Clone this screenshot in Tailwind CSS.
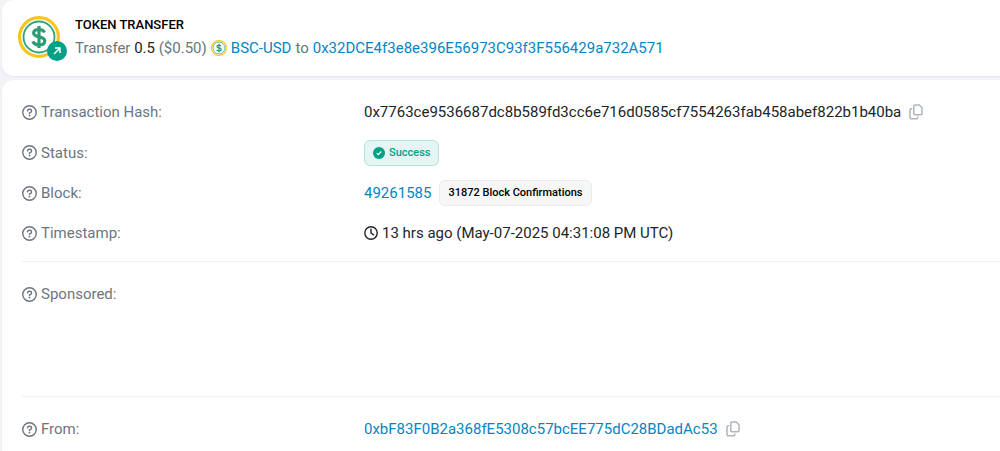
<!DOCTYPE html>
<html lang="en">
    <head>
        <meta charset="utf-8">
        <meta name="viewport" content="width=device-width, initial-scale=1.0">
        <script src="https://cdn.jsdelivr.net/npm/@tailwindcss/browser@4"></script>
        <title>Transaction Details</title>
    </head>
    <body class="min-h-screen overflow-x-hidden bg-[#f1f3f7] pl-[2px] font-['Roboto',sans-serif] text-[15px] leading-6 text-[#212529]">

        <!-- Shared icons -->
        <svg class="hidden">
            <symbol id="icon-help" viewBox="0 0 16 16">
                <circle cx="8" cy="8" r="7.2" fill="none" stroke="currentColor" stroke-width="1.5"/>
                <path d="M5.9 6.300c0-1.100.8-1.800 1.900-1.800h.5c1.100 0 1.900.8 1.900 1.800 0 .7-.4 1.200-1 1.500L8 8.500v.7" fill="none" stroke="currentColor" stroke-width="1.5" stroke-linecap="round"/>
                <circle cx="8" cy="11.300" r="1" fill="currentColor"/>
            </symbol>
            <symbol id="icon-copy" viewBox="0 0 14 16">
                <path d="M6 1h4.300L13 3.700V9.500a1.200 1.200 0 0 1-1.200 1.200H6a1.200 1.200 0 0 1-1.200-1.200V2.200A1.200 1.200 0 0 1 6 1z" fill="none" stroke="currentColor" stroke-width="1.500" stroke-linejoin="round"/>
                <path d="M3.200 4.700H2.200A1.200 1.200 0 0 0 1 5.900v7.600a1.200 1.200 0 0 0 1.200 1.200H7.500a1.200 1.200 0 0 0 1.200-1.200V12.500" fill="none" stroke="currentColor" stroke-width="1.500"/>
            </symbol>
            <symbol id="icon-usd" viewBox="0 0 42 42">
                <circle cx="21" cy="21" r="19.400" fill="#fff" stroke="#f8c51c" stroke-width="3.200"/>
                <circle cx="21" cy="21" r="15.500" fill="#fff" stroke="#2ea57c" stroke-width="1.800"/>
                <path d="M26.500 16.500c-.8-2-2.800-3-5.500-3-3.300 0-5.400 1.400-5.400 3.600 0 5.300 11.200 2.300 11.200 7.800 0 2.400-2.300 3.900-5.800 3.900-3.100 0-5.300-1.200-6.100-3.400M21 10v22" fill="none" stroke="#2a9d74" stroke-width="3.200"/>
            </symbol>
        </svg>

        <!-- Summary card -->
        <section class="flex items-start gap-[15px] rounded-l-xl bg-white py-[14px] pb-4 pl-4 shadow-xs">
            <div class="relative mt-0.5 shrink-0">
                <svg class="size-[42px]"><use href="#icon-usd"/></svg>
                <svg class="absolute top-[25px] left-[29px] size-5" viewBox="0 0 20 20">
                    <circle cx="10" cy="10" r="10" fill="#00a186"/>
                    <path d="M7 13l6-6M8 7h5v5" fill="none" stroke="#fff" stroke-width="1.500"/>
                </svg>
            </div>
            <div>
                <h1 class="text-[13px] leading-[22px] font-medium text-black">TOKEN TRANSFER</h1>
                <p class="flex items-center gap-1 whitespace-nowrap text-[#6c757d]">
                    <span>Transfer <span class="text-[#212529]">0.5</span> ($0.50)</span>
                    <svg class="size-4"><use href="#icon-usd"/></svg>
                    <a href="#" class="text-[#0784c3]">BSC-USD</a>
                    <span>to</span>
                    <a href="#" class="text-[#0784c3]">0x32DCE4f3e8e396E56973C93f3F556429a732A571</a>
                </p>
            </div>
        </section>

        <!-- Details card -->
        <main class="mt-1 rounded-l-xl bg-white pt-3 pb-6 pl-5 shadow-xs">
            <dl class="whitespace-nowrap">
                <div class="grid h-10 grid-cols-[342px_1fr] items-center">
                    <dt class="flex items-center gap-1 text-[#6c757d]"><svg class="size-[15px]"><use href="#icon-help"/></svg>Transaction Hash:</dt>
                    <dd class="flex items-center gap-2">0x7763ce9536687dc8b589fd3cc6e716d0585cf7554263fab458abef822b1b40ba
                        <button type="button" aria-label="Copy hash" class="text-[#adb5bd]"><svg class="h-4 w-[14px]"><use href="#icon-copy"/></svg></button>
                    </dd>
                </div>
                <div class="grid h-[41px] grid-cols-[342px_1fr] items-center">
                    <dt class="flex items-center gap-1 text-[#6c757d]"><svg class="size-[15px]"><use href="#icon-help"/></svg>Status:</dt>
                    <dd class="flex">
                        <span class="flex h-[26px] items-center gap-1 rounded-md border border-[#b3e3db] bg-[#e5f5f3] px-2 text-[11px] font-medium text-[#00a186]">
                            <svg class="size-3" viewBox="0 0 12 12">
                                <circle cx="6" cy="6" r="6" fill="currentColor"/>
                                <path d="M3.700 6.100l1.600 1.600 3-3.200" fill="none" stroke="#fff" stroke-width="1.200"/>
                            </svg>Success
                        </span>
                    </dd>
                </div>
                <div class="grid h-10 grid-cols-[342px_1fr] items-center">
                    <dt class="flex items-center gap-1 text-[#6c757d]"><svg class="size-[15px]"><use href="#icon-help"/></svg>Block:</dt>
                    <dd class="flex items-center gap-2">
                        <a href="#" class="text-[#0784c3]">49261585</a>
                        <span class="flex h-[26px] items-center rounded-md border border-[#e9ecef] bg-[#f7f7f8] px-2 text-[11px] font-medium text-black">31872 Block Confirmations</span>
                    </dd>
                </div>
                <div class="grid h-10 grid-cols-[342px_1fr] items-center">
                    <dt class="flex items-center gap-1 text-[#6c757d]"><svg class="size-[15px]"><use href="#icon-help"/></svg>Timestamp:</dt>
                    <dd class="flex items-center gap-1">
                        <svg class="size-[14px]" viewBox="0 0 14 14" fill="none" stroke="currentColor" stroke-width="1.400">
                            <circle cx="7" cy="7" r="6.200"/>
                            <path d="M7 3.200V7l2.600 1.800" stroke-linecap="round"/>
                        </svg>13 hrs ago (May-07-2025 04:31:08 PM UTC)
                    </dd>
                </div>
            </dl>

            <hr class="my-2 border-[#eff2f4]">

            <dl class="min-h-[118px] pt-1">
                <div class="grid h-10 grid-cols-[342px_1fr] items-center">
                    <dt class="flex items-center gap-1 text-[#6c757d]"><svg class="size-[15px]"><use href="#icon-help"/></svg>Sponsored:</dt>
                    <dd></dd>
                </div>
            </dl>

            <hr class="my-2 border-[#eff2f4]">

            <dl class="whitespace-nowrap pt-1">
                <div class="grid h-10 grid-cols-[342px_1fr] items-center">
                    <dt class="flex items-center gap-1 text-[#6c757d]"><svg class="size-[15px]"><use href="#icon-help"/></svg>From:</dt>
                    <dd class="flex items-center gap-2">
                        <a href="#" class="text-[#0784c3]">0xbF83F0B2a368fE5308c57bcEE775dC28BDadAc53</a>
                        <button type="button" aria-label="Copy address" class="text-[#adb5bd]"><svg class="h-4 w-[14px]"><use href="#icon-copy"/></svg></button>
                    </dd>
                </div>
            </dl>
        </main>
    </body>
</html>
